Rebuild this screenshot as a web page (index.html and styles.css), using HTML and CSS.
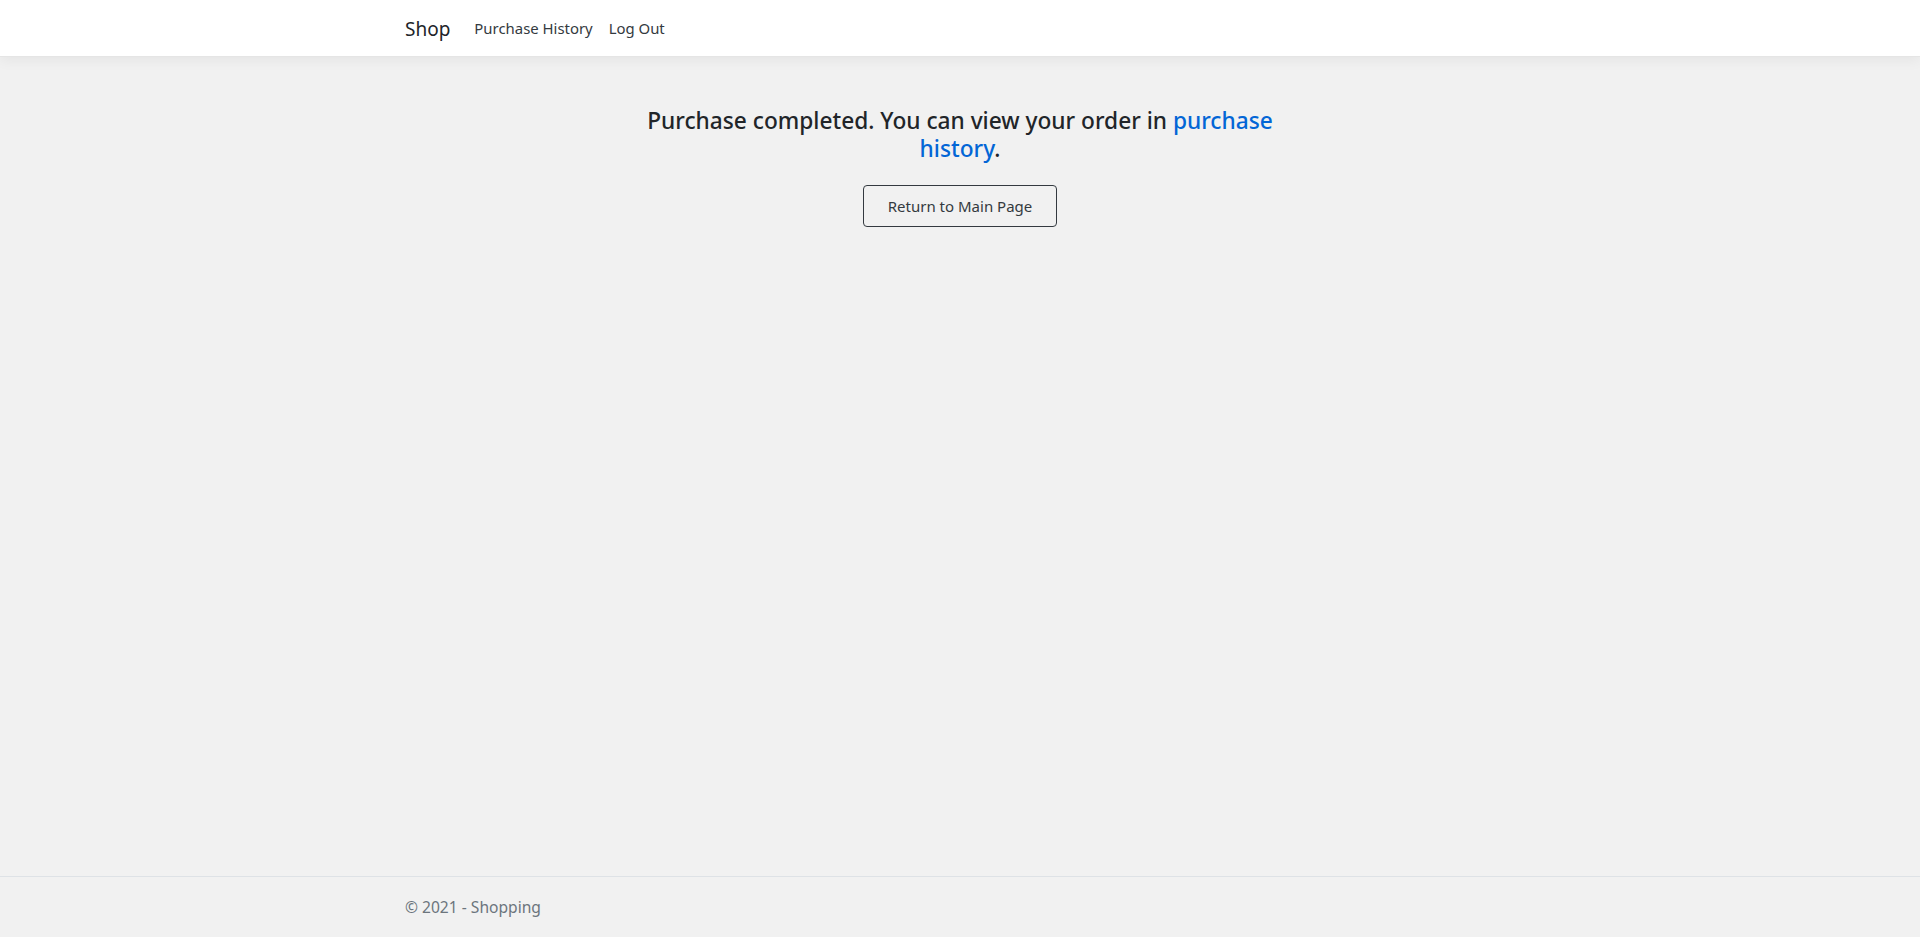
FILE: index.html
```html
<!DOCTYPE html>
<html lang="en">
<head>
<meta charset="utf-8">
<title>Shop</title>
<link rel="stylesheet" href="styles.css">
</head>
<body>
<header class="navbar">
  <div class="container nav-inner">
    <a class="brand" href="#">Shop</a>
    <nav class="nav-links">
      <a class="nav-link" href="#">Purchase History</a>
      <a class="nav-link" href="#">Log Out</a>
    </nav>
  </div>
</header>
<main class="main">
  <div class="container">
    <div class="done">
      <h4 class="done-title">Purchase completed. You can view your order in <a class="link" href="#">purchase history</a>.</h4>
      <a class="btn" href="#">Return to Main Page</a>
    </div>
  </div>
</main>
<footer class="footer">
  <div class="container">&copy; 2021 - Shopping</div>
</footer>
</body>
</html>
```
FILE: styles.css
```css
* { box-sizing: border-box; }
html, body { margin: 0; padding: 0; }
body {
  font-family: "Noto Sans", "Open Sans", sans-serif;
  background: #f1f1f1;
  color: #212529;
  min-height: 100vh;
  display: flex;
  flex-direction: column;
}
a { text-decoration: none; }
.container {
  width: 100%;
  max-width: 1140px;
  margin: 0 auto;
  padding: 0 15px;
}
.navbar {
  background: #fff;
  height: 57px;
  border-bottom: 1px solid #e5e5e5;
  box-shadow: 0 4px 12px rgba(0,0,0,0.05);
}
.nav-inner {
  height: 56px;
  display: flex;
  align-items: center;
}
.brand {
  font-size: 19px;
  color: #212529;
  margin-right: 16px;
  line-height: 30px;
  margin-top: 2px;
}
.nav-links { display: flex; }
.nav-link {
  font-size: 14.9px;
  color: #343a40;
  padding: 0 8px;
  line-height: 24px;
}
.main { flex: 1; }
.done {
  display: flex;
  flex-direction: column;
  align-items: center;
  padding-top: 50px;
}
.done-title {
  margin: 0;
  max-width: 680px;
  text-align: center;
  font-size: 22.7px;
  font-weight: 500;
  line-height: 28px;
  color: #212529;
}
.link { color: #0366d6; }
.btn {
  margin-top: 22px;
  display: inline-flex;
  align-items: center;
  justify-content: center;
  width: 194px;
  height: 42px;
  border: 1px solid #343a40;
  border-radius: 4px;
  font-size: 15px;
  color: #343a40;
}
.footer {
  border-top: 1px solid #dee2e6;
  line-height: 60px;
  font-size: 15.6px;
  color: #6c757d;
  white-space: nowrap;
}
```
